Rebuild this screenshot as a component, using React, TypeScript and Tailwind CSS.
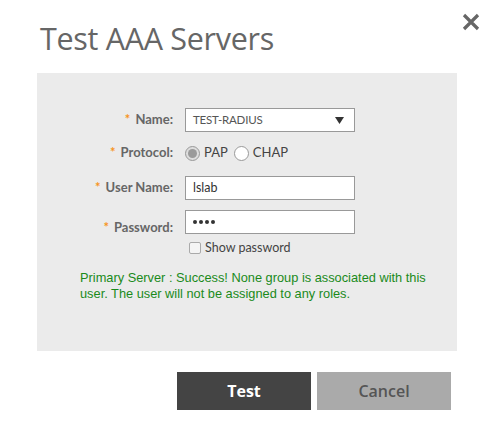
import React from "react";

const Star = () => <span className="text-[#f7941d] mr-[5px]">*</span>;

export default function App() {
  return (
    <div className="w-[490px] h-[435px] bg-white relative font-['Open_Sans',sans-serif]">
      <button className="absolute left-[462px] top-[13px] w-[18px] h-[18px]">
        <svg viewBox="0 0 18 18" width="18" height="18">
          <path d="M2 2 L16 16 M16 2 L2 16" stroke="#666" strokeWidth="3.2" />
        </svg>
      </button>
      <div className="pl-[40px] pt-[18px] h-[73px]">
        <h1 className="text-[30.5px] leading-[40px] text-[#666] font-normal tracking-[-0.3px]">Test AAA Servers</h1>
      </div>
      <div className="ml-[37px] w-[420px] h-[278px] bg-[#ebebeb] pt-[35px]">
        <div className="flex flex-col text-[13px] font-bold text-[#666] font-['Lato',sans-serif]">
          <div className="flex items-center h-[24px]">
            <div className="w-[136px] text-right"><Star />Name:</div>
            <div className="ml-[12px] w-[170px] h-[24px] bg-white border border-[#999] flex items-center justify-between pl-[7px] pr-[10px] font-normal text-[#555]">
              <span className="text-[11.5px] tracking-[-0.2px]">TEST-RADIUS</span>
              <svg width="9" height="7" viewBox="0 0 9 7"><path d="M0 0 H9 L4.5 7 Z" fill="#333" /></svg>
            </div>
          </div>
          <div className="flex items-center h-[22px] mt-[10px]">
            <div className="w-[136px] text-right"><Star />Protocol:</div>
            <div className="ml-[12px] flex items-center font-normal text-[#444] text-[13px]">
              <span className="w-[15px] h-[15px] rounded-full border border-[#999] bg-[#ddd] flex items-center justify-center">
                <span className="w-[9px] h-[9px] rounded-full bg-[#9a9a9a]" />
              </span>
              <span className="ml-[4px]">PAP</span>
              <span className="ml-[6px] w-[15px] h-[15px] rounded-full border border-[#999] bg-white" />
              <span className="ml-[4px]">CHAP</span>
            </div>
          </div>
          <div className="flex items-center h-[24px] mt-[12px]">
            <div className="w-[136px] text-right"><Star />User Name:</div>
            <div className="ml-[12px] w-[170px] h-[24px] bg-white border border-[#999] flex items-center pl-[7px] font-normal text-[#333] text-[12.5px]">lslab</div>
          </div>
          <div className="flex items-center h-[24px] mt-[10px]">
            <div className="w-[136px] text-right pt-[12px]"><Star />Password:</div>
            <div className="ml-[12px] w-[170px] h-[24px] bg-white border border-[#999] flex items-center pl-[7px] gap-[2px]">
              <span className="w-[4px] h-[4px] rounded-full bg-[#333]" />
              <span className="w-[4px] h-[4px] rounded-full bg-[#333]" />
              <span className="w-[4px] h-[4px] rounded-full bg-[#333]" />
              <span className="w-[4px] h-[4px] rounded-full bg-[#333]" />
            </div>
          </div>
          <div className="flex items-center mt-[5px] ml-[152px]">
            <span className="w-[12px] h-[12px] border border-[#aaa] bg-[#f4f4f4] rounded-[2px]" />
            <span className="ml-[4px] font-normal text-[#444] text-[12.5px]">Show password</span>
          </div>
        </div>
        <p className="mt-[12px] ml-[43px] w-[360px] font-['Liberation_Sans',Arial,sans-serif] text-[12.8px] leading-[16px] text-[#1a8a1a]">
          Primary Server : Success! None group is associated with this user. The user will not be assigned to any roles.
        </p>
      </div>
      <div className="flex ml-[177px] mt-[21px] gap-[6px]">
        <button className="w-[134px] h-[38px] bg-[#444] text-white font-bold text-[16px]">Test</button>
        <button className="w-[134px] h-[38px] bg-[#aaa] text-[#555] font-semibold text-[16px]">Cancel</button>
      </div>
    </div>
  );
}
